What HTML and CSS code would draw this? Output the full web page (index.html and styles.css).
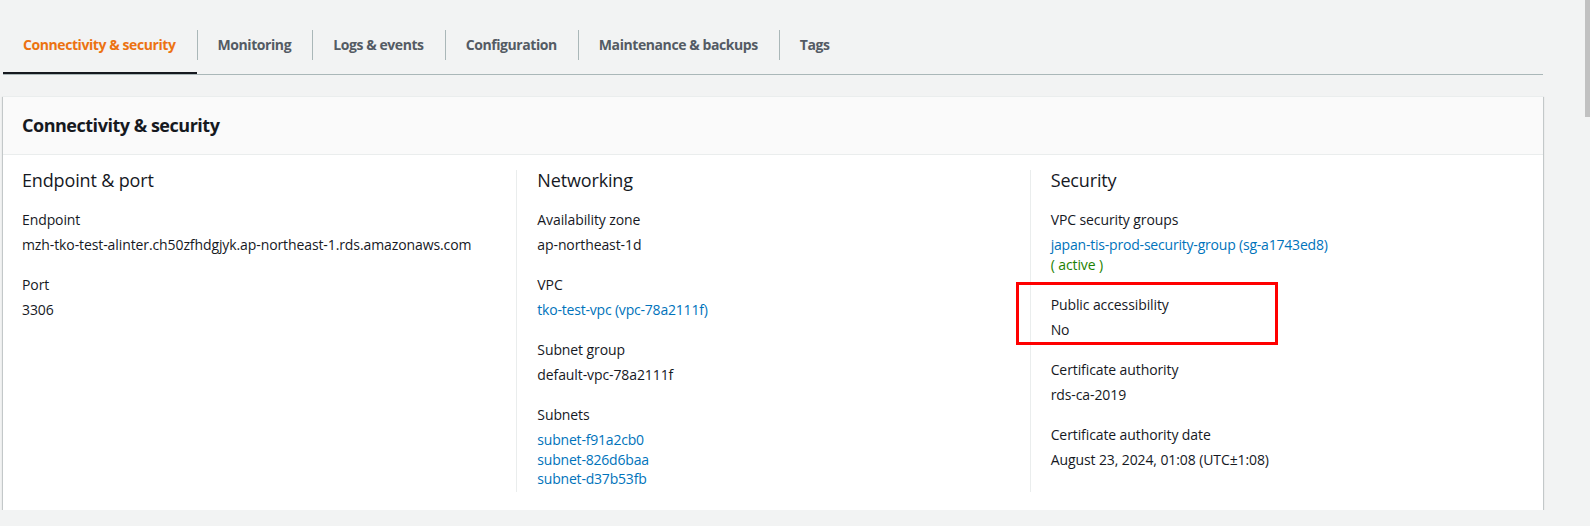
FILE: index.html
```html
<!DOCTYPE html>
<html lang="en">
<head>
<meta charset="utf-8">
<title>Connectivity &amp; security</title>
<link rel="stylesheet" href="styles.css">
</head>
<body>
<div class="page">
  <div class="tabs">
    <div class="tab active"><span class="tab-label">Connectivity &amp; security</span></div>
    <div class="tab"><span class="tab-label sep">Monitoring</span></div>
    <div class="tab"><span class="tab-label sep">Logs &amp; events</span></div>
    <div class="tab"><span class="tab-label sep">Configuration</span></div>
    <div class="tab"><span class="tab-label sep">Maintenance &amp; backups</span></div>
    <div class="tab"><span class="tab-label sep">Tags</span></div>
  </div>

  <div class="card">
    <div class="card-header">Connectivity &amp; security</div>
    <div class="card-body">
      <div class="col">
        <h3 class="col-title">Endpoint &amp; port</h3>
        <div class="field">
          <div class="label">Endpoint</div>
          <div class="value">mzh-tko-test-alinter.ch50zfhdgjyk.ap-northeast-1.rds.amazonaws.com</div>
        </div>
        <div class="field">
          <div class="label">Port</div>
          <div class="value">3306</div>
        </div>
      </div>

      <div class="col divided">
        <h3 class="col-title">Networking</h3>
        <div class="field">
          <div class="label">Availability zone</div>
          <div class="value">ap-northeast-1d</div>
        </div>
        <div class="field">
          <div class="label">VPC</div>
          <div class="value"><a class="link" href="#">tko-test-vpc (vpc-78a2111f)</a></div>
        </div>
        <div class="field">
          <div class="label">Subnet group</div>
          <div class="value">default-vpc-78a2111f</div>
        </div>
        <div class="field">
          <div class="label">Subnets</div>
          <div class="value">
            <a class="link block" href="#">subnet-f91a2cb0</a>
            <a class="link block" href="#">subnet-826d6baa</a>
            <a class="link block" href="#">subnet-d37b53fb</a>
          </div>
        </div>
      </div>

      <div class="col divided">
        <h3 class="col-title">Security</h3>
        <div class="field">
          <div class="label">VPC security groups</div>
          <div class="value">
            <a class="link block" href="#">japan-tis-prod-security-group (sg-a1743ed8)</a>
            <span class="status block">( active )</span>
          </div>
        </div>
        <div class="field highlighted">
          <div class="label">Public accessibility</div>
          <div class="value">No</div>
          <div class="red-box"></div>
        </div>
        <div class="field">
          <div class="label">Certificate authority</div>
          <div class="value">rds-ca-2019</div>
        </div>
        <div class="field">
          <div class="label">Certificate authority date</div>
          <div class="value">August 23, 2024, 01:08 (UTC±1:08)</div>
        </div>
      </div>
    </div>
  </div>
</div>
<div class="scroll-thumb"></div>
</body>
</html>
```
FILE: styles.css
```css
* { box-sizing: border-box; }

html, body {
  margin: 0;
  padding: 0;
  background: #f2f3f3;
}

body {
  font-family: "Open Sans", "Noto Sans", sans-serif;
  font-size: 14px;
  color: #16191f;
  letter-spacing: -0.1px;
}

.page {
  width: 1540px;
  margin-left: 3px;
}

/* Tabs */
.tabs {
  display: flex;
  border-bottom: 1px solid #aab7b8;
}

.tab {
  padding: 30px 0 12px;
  border-bottom: 2px solid transparent;
  font-weight: 700;
  letter-spacing: -0.42px;
  color: #545b64;
}

.tab.active {
  color: #ec7211;
  border-bottom-color: #16191f;
}

.tab-label {
  display: block;
  line-height: 30px;
  padding: 0 21px 0 20px;
}

.tab-label.sep {
  border-left: 1px solid #aab7b8;
}

/* Card */
.card {
  margin-top: 21px;
  background: #ffffff;
  border-top: 1px solid #eaeded;
  box-shadow: 0 1px 1px 0 rgba(0, 28, 36, 0.3),
              1px 1px 1px 0 rgba(0, 28, 36, 0.15),
              -1px 1px 1px 0 rgba(0, 28, 36, 0.15);
}

.card-header {
  background: #fafafa;
  border-bottom: 1px solid #eaeded;
  padding: 17px 19px 18px;
  font-size: 18px;
  line-height: 22px;
  font-weight: 700;
  letter-spacing: -0.48px;
}

.card-body {
  display: grid;
  grid-template-columns: 1fr 1fr 1fr;
  padding: 15px 0 18px;
}

.col {
  padding: 0 19px 3px 19px;
}

.col.divided {
  border-left: 1px solid #eaeded;
  padding-left: 20px;
}

.col-title {
  margin: 0 0 19px;
  font-size: 18px;
  line-height: 21px;
  font-weight: 400;
  letter-spacing: -0.15px;
}

.field {
  margin-bottom: 20.5px;
}

.field:last-child {
  margin-bottom: 0;
}

.label {
  line-height: 20px;
}

.value {
  margin-top: 5px;
  line-height: 19.5px;
}

.block {
  display: block;
}

.link {
  color: #0073bb;
  text-decoration: none;
  letter-spacing: -0.2px;
}

.status {
  color: #1d8102;
}

.highlighted {
  position: relative;
}

.red-box {
  position: absolute;
  left: -35px;
  top: -13px;
  width: 262px;
  height: 63px;
  border: 3px solid #ff0000;
}

.scroll-thumb {
  position: fixed;
  top: 0;
  right: 0;
  width: 5px;
  height: 117px;
  background: #c1c1c1;
}
```
